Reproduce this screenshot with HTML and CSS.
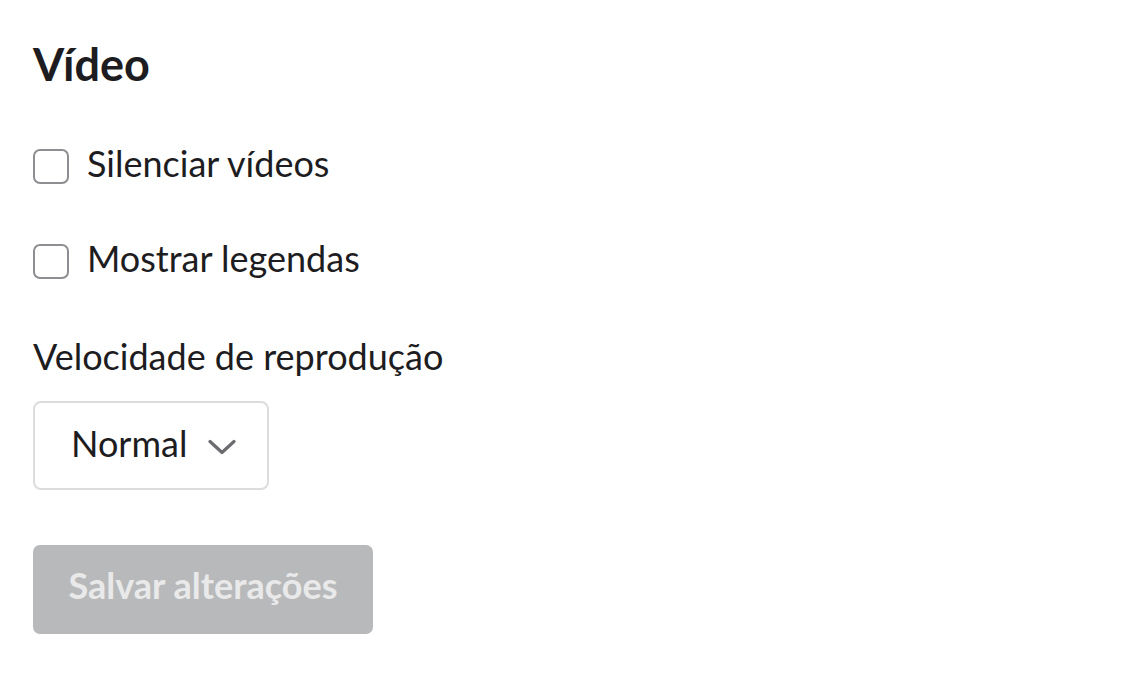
FILE: index.html
```html
<!DOCTYPE html>
<html>
	<head>
		<meta charset="utf-8">
		<title>Vídeo</title>
		<link rel="stylesheet" href="styles.css">
	</head>
	<body>
		<div class="panel">
			<h2 class="title">Vídeo</h2>
			<label class="check">
				<span class="box"></span>
				<span class="check-text">Silenciar vídeos</span>
			</label>
			<label class="check">
				<span class="box"></span>
				<span class="check-text">Mostrar legendas</span>
			</label>
			<div class="field-label">Velocidade de reprodução</div>
			<div class="select">
				<span>Normal</span>
				<svg class="chevron" width="28" height="16" viewBox="0 0 28 16">
					<path d="M2 2.5 L14 13.5 L26 2.5" fill="none" stroke="#6b6b70" stroke-width="3.2" stroke-linecap="round" stroke-linejoin="round"/>
				</svg>
			</div>
			<button class="save" disabled>Salvar alterações</button>
		</div>
	</body>
</html>
```
FILE: styles.css
```css
*{
	margin: 0;
	padding: 0;
	box-sizing: border-box;
}
body{
	background: #fff;
	font-family: Lato, "Liberation Sans", sans-serif;
	color: #1d1c21;
}
.panel{
	padding: 36px 33px;
	display: flex;
	flex-direction: column;
	align-items: flex-start;
}
.title{
	font-size: 45px;
	font-weight: 700;
	line-height: 56px;
	margin-bottom: 57px;
}
.check{
	display: flex;
	align-items: flex-start;
	gap: 18px;
	font-size: 36px;
	line-height: 40px;
	margin-bottom: 60px;
}
.check + .check{
	margin-bottom: 57px;
}
.check-text{
	/* 让文字基线与方框对齐 */
	margin-top: -6px;
}
.box{
	width: 36px;
	height: 35px;
	border: 2px solid #8e8e92;
	border-radius: 7px;
}
.field-label{
	font-size: 36px;
	line-height: 40px;
	margin-bottom: 25px;
}
.select{
	width: 236px;
	height: 89px;
	border: 2px solid #dcdcdd;
	border-radius: 8px;
	display: flex;
	align-items: center;
	padding: 0 0 5px 36px;
	gap: 21px;
	font-size: 36px;
}
.chevron{
	margin-top: 7px;
}
.save{
	margin-top: 55px;
	width: 340px;
	height: 89px;
	padding-bottom: 10px;
	border: none;
	border-radius: 7px;
	background: #b8b9bb;
	color: #e9e9ea;
	font-family: Lato, "Liberation Sans", sans-serif;
	font-size: 36px;
	font-weight: 700;
}
```
